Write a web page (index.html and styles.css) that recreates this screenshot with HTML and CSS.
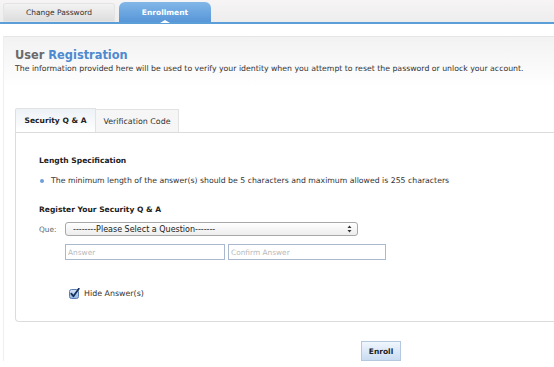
FILE: index.html
```html
<!DOCTYPE html>
<html lang="en">
<head>
  <meta charset="UTF-8" />
  <meta name="viewport" content="width=device-width, initial-scale=1.0" />
  <title>User Registration</title>
  <link rel="stylesheet" href="styles.css">
</head>
<body>
  <nav class="topbar">
    <a href="#" class="top-tab">Change Password</a>
    <a href="#" class="top-tab active">Enrollment</a>
  </nav>

  <div class="page">
    <div class="page-head">
      <h1><span class="muted">User</span> Registration</h1>
      <p>The information provided here will be used to verify your identity when you attempt to reset the password or unlock your account.</p>
    </div>

    <div class="subtabs">
      <a href="#" class="subtab active">Security Q &amp; A</a>
      <a href="#" class="subtab">Verification Code</a>
    </div>

    <div class="tab-panel">
      <h2>Length Specification</h2>
      <ul class="rules">
        <li>The minimum length of the answer(s) should be 5 characters and maximum allowed is 255 characters</li>
      </ul>

      <h2 class="second">Register Your Security Q &amp; A</h2>
      <div class="row">
        <label for="question" class="que">Que:</label>
        <div class="select-wrap">
          <select id="question">
            <option>--------Please Select a Question-------</option>
          </select>
          <svg class="arrows" width="5" height="8" viewBox="0 0 5 8">
            <path d="M0.5 3 L2.5 0.5 L4.5 3 Z M0.5 5 L2.5 7.5 L4.5 5 Z" fill="#333"/>
          </svg>
        </div>
      </div>
      <div class="answers">
        <input type="text" class="answer" placeholder="Answer" />
        <input type="text" class="confirm" placeholder="Confirm Answer" />
      </div>

      <label class="check">
        <svg class="box" width="11" height="11" viewBox="0 0 11 11">
          <defs>
            <linearGradient id="boxFill" x1="0" y1="0" x2="0" y2="1">
              <stop offset="0" stop-color="#d9e7f7"/>
              <stop offset="1" stop-color="#8fb3e0"/>
            </linearGradient>
          </defs>
          <rect x="0.5" y="1.5" width="9" height="9" rx="2" fill="url(#boxFill)" stroke="#5a7db0"/>
          <path d="M2.3 5.6 L4.4 8.3 L9.8 0.8" fill="none" stroke="#16305e" stroke-width="1.8" stroke-linecap="round" stroke-linejoin="round"/>
        </svg>
        Hide Answer(s)
      </label>
    </div>

    <div class="actions">
      <button type="submit" class="btn">Enroll</button>
    </div>
  </div>
</body>
</html>
```

FILE: styles.css
```css
body {
  font-family: "DejaVu Sans", Verdana, sans-serif;
  color: #333;
  background-color: #fff;
  margin: 0;
  padding: 0;
}

a {
  text-decoration: none;
}

/* top navigation */
.topbar {
  display: flex;
  gap: 4px;
  height: 22px;
  padding: 0 0 0 3px;
  align-items: flex-end;
  background: linear-gradient(#f6f4f4, #eeeded);
  border-bottom: 2px solid #5c9fd8;
}

.top-tab {
  display: flex;
  align-items: center;
  justify-content: center;
  width: 112px;
  height: 19px;
  font-size: 7.5px;
  color: #333;
  background: linear-gradient(#f4f4f4, #dcdcdc);
  border-radius: 3px 3px 0 0;
  box-shadow: inset 0 0 0 1px #e4e4e4;
}

.top-tab.active {
  position: relative;
  width: 92px;
  height: 20px;
  color: #fff;
  font-weight: bold;
  background: linear-gradient(#82b7e8, #5796d8);
  border-radius: 6px 6px 0 0;
  box-shadow: none;
}

.top-tab.active::after {
  content: "";
  position: absolute;
  bottom: -1px;
  left: 41px;
  border-left: 5px solid transparent;
  border-right: 5px solid transparent;
  border-bottom: 3px solid #fff;
}

/* page */
.page {
  margin: 12px 0 0 3px;
  background: linear-gradient(#f2f2f2, #fff 50px);
  border-top: 1px solid #e6e6e6;
  border-left: 1px solid #efefef;
}

.page-head {
  padding: 11px 0 0 11px;
}

h1 {
  margin: 0;
  font-size: 11.4px;
  color: #4d8ad0;
  line-height: 14px;
}

h1 .muted {
  color: #6a6a6a;
}

.page-head p {
  margin: 1px 0 0;
  font-size: 7.78px;
  line-height: 12px;
}

/* inner tabs */
.subtabs {
  display: flex;
  align-items: flex-end;
  margin: 33px 0 0 11px;
}

.subtab {
  display: flex;
  align-items: center;
  justify-content: center;
  width: 82px;
  height: 22px;
  font-size: 7.9px;
  color: #333;
  background: #f6f6f6;
  border: 1px solid #e2e2e2;
  border-bottom: none;
  border-left: none;
}

.subtab.active {
  width: 79px;
  height: 23px;
  font-size: 7.55px;
  font-weight: bold;
  color: #222;
  background: linear-gradient(#edf2f7, #fff);
  border-left: 1px solid #dedede;
  border-top-left-radius: 2px;
}

.tab-panel {
  margin-left: 11px;
  height: 188px;
  padding: 0 0 0 23px;
  border: 1px solid #dcdcdc;
  border-right: none;
  border-radius: 0 0 0 4px;
  background-color: #fff;
}

h2 {
  margin: 23px 0 0;
  font-size: 7.55px;
  line-height: 10px;
  color: #222;
}

h2.second {
  margin-top: 19px;
}

.rules {
  margin: 10px 0 0;
  padding: 0;
  list-style: none;
}

.rules li {
  position: relative;
  padding-left: 12px;
  font-size: 7.75px;
  line-height: 10px;
}

.rules li::before {
  content: "";
  position: absolute;
  left: 1px;
  top: 3px;
  width: 4px;
  height: 4px;
  border-radius: 50%;
  background-color: #6f9fd6;
}

.row {
  display: flex;
  align-items: center;
  margin-top: 7px;
}

.que {
  width: 26px;
  font-size: 7.4px;
  color: #666;
}

.select-wrap {
  position: relative;
  width: 293px;
}

select {
  display: block;
  width: 100%;
  height: 14px;
  padding: 0 0 0 7px;
  font-family: inherit;
  font-size: 8px;
  color: #222;
  -webkit-appearance: none;
  appearance: none;
  background: linear-gradient(#fff, #ededed);
  border: 1px solid #a8a8a8;
  border-radius: 3px;
  outline: none;
}

.select-wrap .arrows {
  position: absolute;
  right: 6px;
  top: 3px;
}

.answers {
  display: flex;
  gap: 3px;
  margin: 8px 0 0 26px;
}

.answers input {
  height: 16px;
  box-sizing: border-box;
  padding: 0 2px;
  font-family: inherit;
  font-size: 7.4px;
  border: 1px solid #aab8cd;
  outline: none;
}

.answers input::placeholder {
  color: #b9b9b9;
}

.answer {
  width: 160px;
}

.confirm {
  width: 158px;
}

.check {
  display: flex;
  align-items: center;
  gap: 4px;
  margin: 28px 0 0 30px;
  font-size: 7.9px;
  color: #333;
}

/* footer action */
.actions {
  display: flex;
  padding: 19px 0 0 357px;
}

.btn {
  width: 40px;
  height: 20px;
  padding: 0;
  font-family: inherit;
  font-size: 7.5px;
  font-weight: bold;
  color: #222;
  background: linear-gradient(#f0f6fd, #c9dcf2);
  border: 1px solid #b5c8e0;
  cursor: pointer;
}
```
